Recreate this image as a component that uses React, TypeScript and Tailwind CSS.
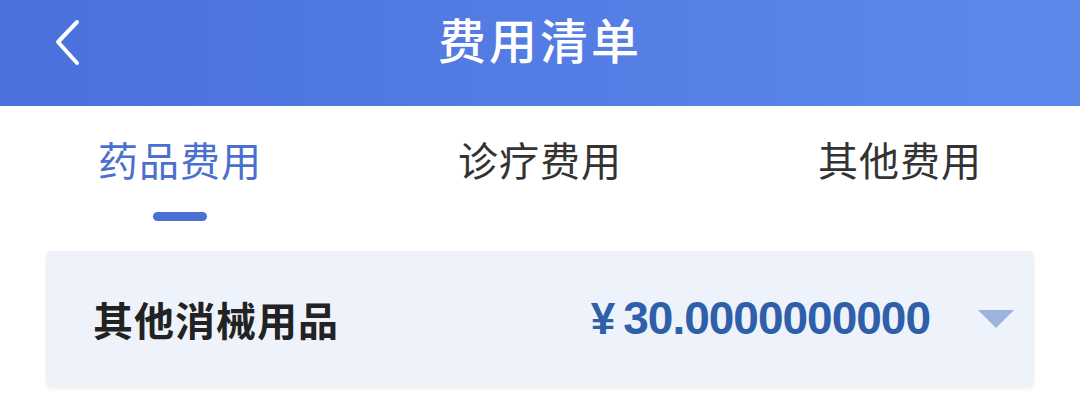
// 费用清单 — fee list page header, tabs and one item row

const tabs = ['药品费用', '诊疗费用', '其他费用'];

const font = "font-['Noto_Sans_CJK_SC','Noto_Sans',sans-serif]";

export default function App() {
  return (
    <div className={`w-[1080px] h-[414px] overflow-hidden bg-white ${font}`}>
      {/* Header */}
      <div className="relative flex h-[106px] items-center justify-center bg-gradient-to-r from-[#4a70dc] to-[#5d89ec]">
        <button className="absolute left-[48px] top-[14px] p-1">
          <svg width="30" height="50" viewBox="0 0 30 50" fill="none">
            <path
              d="M25 4 L6 24 L25 45"
              stroke="white"
              strokeWidth="4"
              strokeLinecap="round"
              strokeLinejoin="round"
            />
          </svg>
        </button>
        <h1 className="-mt-[30px] text-[48px] font-medium tracking-[3px] text-white">费用清单</h1>
      </div>

      {/* Tabs */}
      <div className="grid grid-cols-3 pt-[26px]">
        {tabs.map((t, i) => (
          <div key={t} className="flex flex-col items-center">
            <span
              className={`text-[40px] leading-[54px] tracking-[1px] ${
                i === 0 ? 'text-[#4b6fcf]' : 'text-[#333333]'
              }`}
            >
              {t}
            </span>
            <div
              className={`mt-[26px] h-[9px] w-[54px] rounded-full ${i === 0 ? 'bg-[#4a70d6]' : 'bg-transparent'}`}
            />
          </div>
        ))}
      </div>

      {/* Item card */}
      <div className="mx-[46px] mt-[30px] flex h-[135px] items-center rounded-[4px] bg-[#eef2fb] pl-[47px] pr-[20px] shadow-[0_3px_4px_rgba(0,0,0,0.06)]">
        <span className="flex-1 text-[40px] font-bold tracking-[1px] text-[#222222]">其他消械用品</span>
        <span className="flex items-baseline text-[46px] font-bold text-[#2f5fa9] font-['Liberation_Sans',sans-serif]">
          <span className="mr-[8px] text-[44px]">¥</span>
          <span className="tracking-[-1px]">30.0000000000</span>
        </span>
        <svg className="ml-[48px]" width="36" height="20" viewBox="0 0 36 20">
          <path d="M0 1 L36 1 L18 19 Z" fill="#9cb3e0" />
        </svg>
      </div>
    </div>
  );
}
